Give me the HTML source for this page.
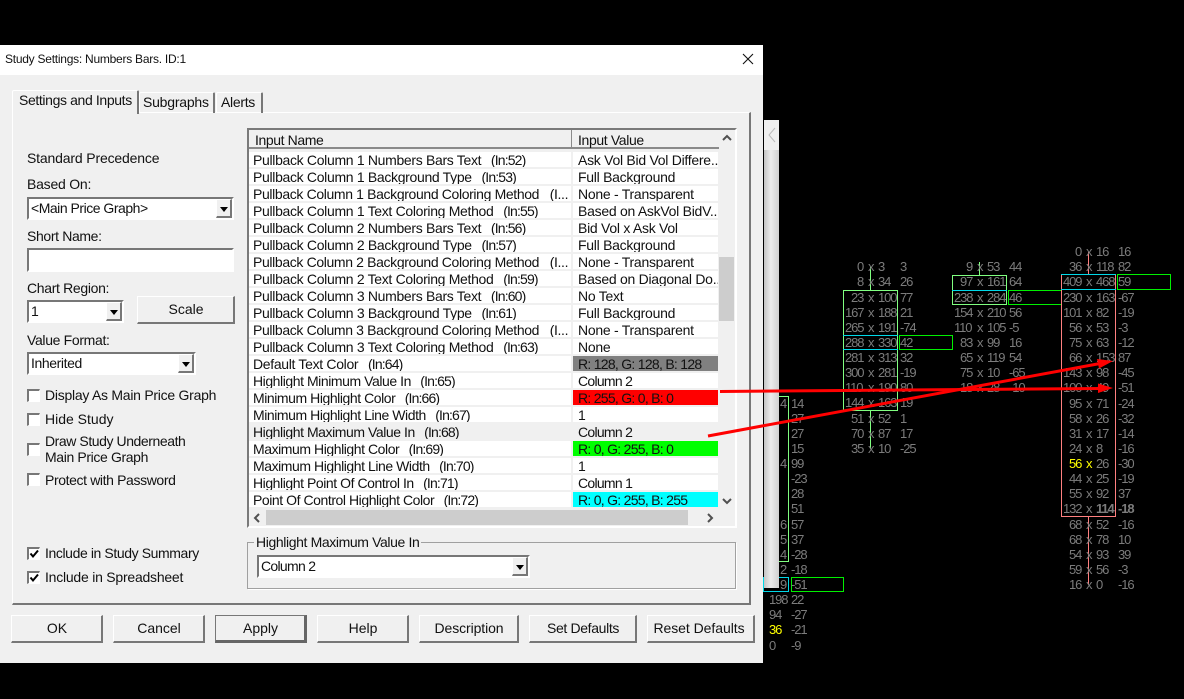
<!DOCTYPE html>
<html><head><meta charset="utf-8"><style>
html,body{margin:0;padding:0;background:#000;width:1184px;height:699px;overflow:hidden}
body{position:relative;font:14px/17px "Liberation Sans",sans-serif;color:#111;letter-spacing:-.3px}
div{position:absolute;white-space:pre;box-sizing:border-box}
i{font-style:normal;letter-spacing:-.85px;margin-left:-1px}
.bx{background:#fff;border-top:2px solid #777;border-left:2px solid #777;border-right:2px solid #fff;border-bottom:2px solid #fff;padding-left:2px}
.ar{background:#f0f0f0;border:1px solid #fff;border-right:2px solid #777;border-bottom:2px solid #777;width:16px;top:0;bottom:0;right:0}
.ar:after{content:"";position:absolute;left:3px;top:7px;border:4.5px solid transparent;border-top:5px solid #000;border-bottom:0}
.btn{background:#f0f0f0;border:1px solid #fff;border-right:2px solid #777;border-bottom:2px solid #777;text-align:center;line-height:24px;height:28px;top:615px;letter-spacing:0;padding-left:1px}
.cb{width:13px;height:13px;left:27px;background:#fff;border-top:2px solid #777;border-left:2px solid #777;border-right:1px solid #fff;border-bottom:1px solid #fff}
.l{left:45px}
.r{left:249px;width:322px;height:17px;padding-left:4px;border-bottom:2px solid #f0f0f0;background:#fff;line-height:16px;overflow:hidden;letter-spacing:-.32px}
.t{letter-spacing:-.36px}
.u{letter-spacing:-.44px}
.v{left:573px;width:145px;height:17px;padding-left:5px;border-bottom:2px solid #f0f0f0;background:#fff;line-height:16px;overflow:hidden;letter-spacing:-.27px}
.c{letter-spacing:-.72px}
.g{color:#7c7c7c;font-size:13px;line-height:16px;letter-spacing:-1.1px}
.p{background:linear-gradient(90deg,#c4c4c4,#ececec 45%,#d0d0d0)}
</style></head><body>

<!-- chart -->
<div style="left:0;top:0;width:1184px;height:699px" class="g">
<div style="left:843px;top:290px;width:55px;height:121px;border:1px solid #80ff80"></div>
<div style="left:843px;top:335px;width:55px;height:15px;border-top:1px solid #00d8e8;border-bottom:1px solid #00d8e8"></div>
<div style="left:870px;top:267px;width:1px;height:23px;background:#80ff80"></div>
<div style="left:870px;top:411px;width:1px;height:38px;background:#80ff80"></div>
<div style="left:899px;top:335px;width:54px;height:15px;border:1px solid #00f000"></div>
<div style="left:952px;top:275px;width:55px;height:30px;border:1px solid #80ff80"></div>
<div style="left:952px;top:290px;width:55px;height:1px;background:#00d8e8"></div>
<div style="left:1008px;top:290px;width:54px;height:15px;border:1px solid #00f000"></div>
<div style="left:979px;top:262px;width:1px;height:13px;background:#80ff80"></div>
<div style="left:1061px;top:274px;width:55px;height:243px;border:1px solid #ff8080"></div>
<div style="left:1061px;top:274px;width:55px;height:16px;border-top:1px solid #00d8e8;border-bottom:1px solid #00d8e8"></div>
<div style="left:1117px;top:274px;width:54px;height:16px;border:1px solid #00f000"></div>
<div style="left:1088px;top:252px;width:1px;height:22px;background:#ff8080"></div>
<div style="left:1088px;top:517px;width:1px;height:68px;background:#ff8080"></div>
<div style="left:779px;top:396px;width:10px;height:166px;border:1px solid #80ff80;border-left:0"></div>
<div style="left:763px;top:577px;width:26px;height:15px;border:1px solid #00d8e8"></div>
<div style="left:791px;top:577px;width:53px;height:15px;border:1px solid #00f000"></div>

<!-- column 1 -->
<div style="left:857px;top:259px">0</div><div style="left:868px;top:259px">x</div><div style="left:878px;top:259px">3</div><div style="left:900px;top:259px">3</div>
<div style="left:857px;top:274px">8</div><div style="left:868px;top:274px">x</div><div style="left:878px;top:274px">34</div><div style="left:900px;top:274px">26</div>
<div style="left:851px;top:290px">23</div><div style="left:868px;top:290px">x</div><div style="left:878px;top:290px">100</div><div style="left:900px;top:290px">77</div>
<div style="left:845px;top:305px">167</div><div style="left:868px;top:305px">x</div><div style="left:878px;top:305px">188</div><div style="left:900px;top:305px">21</div>
<div style="left:845px;top:320px">265</div><div style="left:868px;top:320px">x</div><div style="left:878px;top:320px">191</div><div style="left:900px;top:320px">-74</div>
<div style="left:845px;top:335px">288</div><div style="left:868px;top:335px">x</div><div style="left:878px;top:335px">330</div><div style="left:900px;top:335px">42</div>
<div style="left:845px;top:350px">281</div><div style="left:868px;top:350px">x</div><div style="left:878px;top:350px">313</div><div style="left:900px;top:350px">32</div>
<div style="left:845px;top:365px">300</div><div style="left:868px;top:365px">x</div><div style="left:878px;top:365px">281</div><div style="left:900px;top:365px">-19</div>
<div style="left:845px;top:380px">110</div><div style="left:868px;top:380px">x</div><div style="left:878px;top:380px">190</div><div style="left:900px;top:380px">80</div>
<div style="left:845px;top:395px">144</div><div style="left:868px;top:395px">x</div><div style="left:878px;top:395px">163</div><div style="left:900px;top:395px">19</div>
<div style="left:851px;top:411px">51</div><div style="left:868px;top:411px">x</div><div style="left:878px;top:411px">52</div><div style="left:900px;top:411px">1</div>
<div style="left:851px;top:426px">70</div><div style="left:868px;top:426px">x</div><div style="left:878px;top:426px">87</div><div style="left:900px;top:426px">17</div>
<div style="left:851px;top:441px">35</div><div style="left:868px;top:441px">x</div><div style="left:878px;top:441px">10</div><div style="left:900px;top:441px">-25</div>

<!-- column 2 -->
<div style="left:966px;top:259px">9</div><div style="left:977px;top:259px">x</div><div style="left:987px;top:259px">53</div><div style="left:1009px;top:259px">44</div>
<div style="left:960px;top:274px">97</div><div style="left:977px;top:274px">x</div><div style="left:987px;top:274px">161</div><div style="left:1009px;top:274px">64</div>
<div style="left:954px;top:290px">238</div><div style="left:977px;top:290px">x</div><div style="left:987px;top:290px">284</div><div style="left:1009px;top:290px">46</div>
<div style="left:954px;top:305px">154</div><div style="left:977px;top:305px">x</div><div style="left:987px;top:305px">210</div><div style="left:1009px;top:305px">56</div>
<div style="left:954px;top:320px">110</div><div style="left:977px;top:320px">x</div><div style="left:987px;top:320px">105</div><div style="left:1009px;top:320px">-5</div>
<div style="left:960px;top:335px">83</div><div style="left:977px;top:335px">x</div><div style="left:987px;top:335px">99</div><div style="left:1009px;top:335px">16</div>
<div style="left:960px;top:350px">65</div><div style="left:977px;top:350px">x</div><div style="left:987px;top:350px">119</div><div style="left:1009px;top:350px">54</div>
<div style="left:960px;top:365px">75</div><div style="left:977px;top:365px">x</div><div style="left:987px;top:365px">10</div><div style="left:1009px;top:365px">-65</div>
<div style="left:960px;top:380px">18</div><div style="left:977px;top:380px">x</div><div style="left:987px;top:380px">28</div><div style="left:1009px;top:380px">-10</div>

<!-- column 3 -->
<div style="left:1075px;top:244px">0</div><div style="left:1086px;top:244px">x</div><div style="left:1096px;top:244px">16</div><div style="left:1118px;top:244px">16</div>
<div style="left:1069px;top:259px">36</div><div style="left:1086px;top:259px">x</div><div style="left:1096px;top:259px">118</div><div style="left:1118px;top:259px">82</div>
<div style="left:1063px;top:274px">409</div><div style="left:1086px;top:274px">x</div><div style="left:1096px;top:274px">468</div><div style="left:1118px;top:274px">59</div>
<div style="left:1063px;top:290px">230</div><div style="left:1086px;top:290px">x</div><div style="left:1096px;top:290px">163</div><div style="left:1118px;top:290px">-67</div>
<div style="left:1063px;top:305px">101</div><div style="left:1086px;top:305px">x</div><div style="left:1096px;top:305px">82</div><div style="left:1118px;top:305px">-19</div>
<div style="left:1069px;top:320px">56</div><div style="left:1086px;top:320px">x</div><div style="left:1096px;top:320px">53</div><div style="left:1118px;top:320px">-3</div>
<div style="left:1069px;top:335px">75</div><div style="left:1086px;top:335px">x</div><div style="left:1096px;top:335px">63</div><div style="left:1118px;top:335px">-12</div>
<div style="left:1069px;top:350px">66</div><div style="left:1086px;top:350px">x</div><div style="left:1096px;top:350px">153</div><div style="left:1118px;top:350px">87</div>
<div style="left:1063px;top:365px">143</div><div style="left:1086px;top:365px">x</div><div style="left:1096px;top:365px">98</div><div style="left:1118px;top:365px">-45</div>
<div style="left:1063px;top:380px">100</div><div style="left:1086px;top:380px">x</div><div style="left:1096px;top:380px">49</div><div style="left:1118px;top:380px">-51</div>
<div style="left:1069px;top:396px">95</div><div style="left:1086px;top:396px">x</div><div style="left:1096px;top:396px">71</div><div style="left:1118px;top:396px">-24</div>
<div style="left:1069px;top:411px">58</div><div style="left:1086px;top:411px">x</div><div style="left:1096px;top:411px">26</div><div style="left:1118px;top:411px">-32</div>
<div style="left:1069px;top:426px">31</div><div style="left:1086px;top:426px">x</div><div style="left:1096px;top:426px">17</div><div style="left:1118px;top:426px">-14</div>
<div style="left:1069px;top:441px">24</div><div style="left:1086px;top:441px">x</div><div style="left:1096px;top:441px">8</div><div style="left:1118px;top:441px">-16</div>
<div style="left:1069px;top:456px;color:#ffff00">56</div><div style="left:1086px;top:456px;color:#ffff00">x</div><div style="left:1096px;top:456px">26</div><div style="left:1118px;top:456px">-30</div>
<div style="left:1069px;top:471px">44</div><div style="left:1086px;top:471px">x</div><div style="left:1096px;top:471px">25</div><div style="left:1118px;top:471px">-19</div>
<div style="left:1069px;top:486px">55</div><div style="left:1086px;top:486px">x</div><div style="left:1096px;top:486px">92</div><div style="left:1118px;top:486px">37</div>
<div style="left:1063px;top:501px">132</div><div style="left:1086px;top:501px">x</div><div style="left:1096px;top:501px;font-weight:bold">114</div><div style="left:1118px;top:501px;font-weight:bold">-18</div>
<div style="left:1069px;top:517px">68</div><div style="left:1086px;top:517px">x</div><div style="left:1096px;top:517px">52</div><div style="left:1118px;top:517px">-16</div>
<div style="left:1069px;top:532px">68</div><div style="left:1086px;top:532px">x</div><div style="left:1096px;top:532px">78</div><div style="left:1118px;top:532px">10</div>
<div style="left:1069px;top:547px">54</div><div style="left:1086px;top:547px">x</div><div style="left:1096px;top:547px">93</div><div style="left:1118px;top:547px">39</div>
<div style="left:1069px;top:562px">59</div><div style="left:1086px;top:562px">x</div><div style="left:1096px;top:562px">56</div><div style="left:1118px;top:562px">-3</div>
<div style="left:1069px;top:577px">16</div><div style="left:1086px;top:577px">x</div><div style="left:1096px;top:577px">0</div><div style="left:1118px;top:577px">-16</div>

<!-- left partial column -->
<div style="left:791px;top:396px">14</div><div style="left:791px;top:411px">27</div><div style="left:791px;top:426px">27</div><div style="left:791px;top:441px">15</div>
<div style="left:791px;top:456px">99</div><div style="left:791px;top:471px">-23</div><div style="left:791px;top:486px">28</div><div style="left:791px;top:501px">51</div>
<div style="left:791px;top:517px">57</div><div style="left:791px;top:532px">37</div><div style="left:791px;top:547px">-28</div><div style="left:791px;top:562px">-18</div>
<div style="left:791px;top:577px">-51</div><div style="left:791px;top:592px">22</div><div style="left:791px;top:607px">-27</div><div style="left:791px;top:622px">-21</div><div style="left:791px;top:638px">-9</div>
<div style="left:780px;top:396px">4</div><div style="left:780px;top:456px">4</div><div style="left:780px;top:517px">6</div><div style="left:780px;top:532px">5</div><div style="left:780px;top:547px">4</div><div style="left:780px;top:562px">2</div><div style="left:780px;top:577px">9</div>
<div style="left:769px;top:592px">198</div><div style="left:769px;top:607px">94</div><div style="left:769px;top:622px;color:#ffff00">36</div><div style="left:769px;top:638px">0</div>
</div>
<div class="p" style="left:764px;top:150px;width:15px;height:438px"></div>
<div style="left:764px;top:120px;width:15px;height:30px;background:#efefef"></div>
<svg style="position:absolute;left:764px;top:120px" width="15" height="30"><path d="M11 8 L5 15 L11 22" fill="none" stroke="#bbb"/></svg>

<!-- dialog -->
<div style="left:0;top:45px;width:763px;height:618px;background:#f0f0f0"></div>
<div style="left:0;top:45px;width:763px;height:30px;background:#fff"></div>
<div style="left:5px;top:51px;font-size:12px;letter-spacing:-.25px">Study Settings: Numbers Bars. ID:1</div>
<svg style="position:absolute;left:742px;top:53px" width="12" height="12"><path d="M1 1 L11 11 M11 1 L1 11" stroke="#111" stroke-width="1.1" fill="none"/></svg>

<!-- tab panel -->
<div style="left:12px;top:112px;width:739px;height:493px;border:1px solid #fff;border-right:2px solid #777;border-bottom:2px solid #777;background:#f0f0f0"></div>
<div style="left:139px;top:92px;width:76px;height:21px;border:1px solid #fff;border-right:2px solid #777;border-bottom:0;border-radius:2px 2px 0 0"></div>
<div style="left:216px;top:92px;width:47px;height:21px;border:1px solid #fff;border-right:2px solid #777;border-bottom:0;border-radius:2px 2px 0 0"></div>
<div style="left:12px;top:90px;width:127px;height:24px;border:1px solid #fff;border-right:2px solid #777;border-bottom:0;background:#f0f0f0;border-radius:2px 2px 0 0"></div>
<div style="left:19px;top:92px;letter-spacing:-.37px">Settings and Inputs</div>
<div style="left:143px;top:94px;letter-spacing:-.22px">Subgraphs</div>
<div style="left:221px;top:94px">Alerts</div>

<!-- left column -->
<div style="left:27px;top:150px;letter-spacing:-.16px">Standard Precedence</div>
<div style="left:27px;top:176px;letter-spacing:-.22px">Based On:</div>
<div class="bx" style="left:27px;top:197px;width:207px;height:23px;line-height:18px;letter-spacing:-.48px">&lt;Main Price Graph&gt;<div class="ar"></div></div>
<div style="left:27px;top:228px;letter-spacing:-.36px">Short Name:</div>
<div class="bx" style="left:27px;top:248px;width:207px;height:24px"></div>
<div style="left:27px;top:280px;letter-spacing:-.33px">Chart Region:</div>
<div class="bx" style="left:27px;top:300px;width:97px;height:23px;line-height:18px">1<div class="ar"></div></div>
<div class="btn" style="left:137px;top:296px;width:98px">Scale</div>
<div style="left:27px;top:332px;letter-spacing:-.33px">Value Format:</div>
<div class="bx" style="left:27px;top:352px;width:169px;height:23px;line-height:19px;letter-spacing:-.4px">Inherited<div class="ar"></div></div>

<div class="cb" style="top:389px"></div><div class="l" style="top:387px;letter-spacing:-.26px">Display As Main Price Graph</div>
<div class="cb" style="top:413px"></div><div class="l" style="top:411px;letter-spacing:0">Hide Study</div>
<div class="cb" style="top:443px"></div><div class="l" style="top:433px;letter-spacing:-.43px">Draw Study Underneath</div><div class="l" style="top:449px;letter-spacing:-.37px">Main Price Graph</div>
<div class="cb" style="top:473px"></div><div class="l" style="top:472px;letter-spacing:-.38px">Protect with Password</div>
<div class="cb" style="top:547px"><svg style="position:absolute;left:0;top:0" width="10" height="10"><path d="M1.5 4.5 L4 7.5 L9 1.5" fill="none" stroke="#000" stroke-width="2"/></svg></div><div class="l" style="top:545px;letter-spacing:-.4px">Include in Study Summary</div>
<div class="cb" style="top:571px"><svg style="position:absolute;left:0;top:0" width="10" height="10"><path d="M1.5 4.5 L4 7.5 L9 1.5" fill="none" stroke="#000" stroke-width="2"/></svg></div><div class="l" style="top:569px;letter-spacing:-.23px">Include in Spreadsheet</div>

<!-- table -->
<div style="left:247px;top:128px;width:490px;height:400px;border-top:2px solid #7a7a7a;border-left:2px solid #7a7a7a;border-right:2px solid #fff;border-bottom:2px solid #fff;background:#f0f0f0"></div>
<div style="left:249px;top:130px;width:470px;height:19px;background:#f0f0f0;border-bottom:2px solid #8a8a8a"></div>
<div style="left:571px;top:130px;width:1px;height:19px;background:#8a8a8a"></div>
<div style="left:255px;top:132px;letter-spacing:-.4px">Input Name</div>
<div style="left:578px;top:132px;letter-spacing:-.36px">Input Value</div>

<div class="r" style="top:152px">Pullback Column 1 Numbers Bars Text   <i>(In:52)</i></div><div class="v" style="top:152px">Ask Vol Bid Vol Differe...</div>
<div class="r" style="top:169px">Pullback Column 1 Background Type   <i>(In:53)</i></div><div class="v" style="top:169px">Full Background</div>
<div class="r t" style="top:186px">Pullback Column 1 Background Coloring Method   (I...</div><div class="v" style="top:186px">None - Transparent</div>
<div class="r" style="top:203px">Pullback Column 1 Text Coloring Method   <i>(In:55)</i></div><div class="v" style="top:203px">Based on AskVol BidV...</div>
<div class="r" style="top:220px">Pullback Column 2 Numbers Bars Text   <i>(In:56)</i></div><div class="v" style="top:220px">Bid Vol x Ask Vol</div>
<div class="r" style="top:237px">Pullback Column 2 Background Type   <i>(In:57)</i></div><div class="v" style="top:237px">Full Background</div>
<div class="r t" style="top:254px">Pullback Column 2 Background Coloring Method   (I...</div><div class="v" style="top:254px">None - Transparent</div>
<div class="r" style="top:271px">Pullback Column 2 Text Coloring Method   <i>(In:59)</i></div><div class="v" style="top:271px">Based on Diagonal Do...</div>
<div class="r" style="top:288px">Pullback Column 3 Numbers Bars Text   <i>(In:60)</i></div><div class="v" style="top:288px">No Text</div>
<div class="r" style="top:305px">Pullback Column 3 Background Type   <i>(In:61)</i></div><div class="v" style="top:305px">Full Background</div>
<div class="r t" style="top:322px">Pullback Column 3 Background Coloring Method   (I...</div><div class="v" style="top:322px">None - Transparent</div>
<div class="r" style="top:339px">Pullback Column 3 Text Coloring Method   <i>(In:63)</i></div><div class="v" style="top:339px">None</div>
<div class="r" style="top:356px">Default Text Color   <i>(In:64)</i></div><div class="v c" style="top:356px;background:#808080">R: 128, G: 128, B: 128</div>
<div class="r u" style="top:373px">Highlight Minimum Value In   <i>(In:65)</i></div><div class="v c" style="top:373px">Column 2</div>
<div class="r u" style="top:390px">Minimum Highlight Color   <i>(In:66)</i></div><div class="v c" style="top:390px;background:#ff0000">R: 255, G: 0, B: 0</div>
<div class="r u" style="top:407px">Minimum Highlight Line Width   <i>(In:67)</i></div><div class="v" style="top:407px">1</div>
<div class="r u" style="top:424px;background:#f0f0f0">Highlight Maximum Value In   <i>(In:68)</i></div><div class="v c" style="top:424px;background:#f0f0f0">Column 2</div>
<div class="r u" style="top:441px">Maximum Highlight Color   <i>(In:69)</i></div><div class="v c" style="top:441px;background:#00ff00">R: 0, G: 255, B: 0</div>
<div class="r u" style="top:458px">Maximum Highlight Line Width   <i>(In:70)</i></div><div class="v" style="top:458px">1</div>
<div class="r u" style="top:475px">Highlight Point Of Control In   <i>(In:71)</i></div><div class="v c" style="top:475px">Column 1</div>
<div class="r u" style="top:492px">Point Of Control Highlight Color   <i>(In:72)</i></div><div class="v c" style="top:492px;background:#00ffff">R: 0, G: 255, B: 255</div>

<!-- scrollbars -->
<div style="left:719px;top:257px;width:15px;height:64px;background:#cdcdcd"></div>
<svg style="position:absolute;left:721px;top:133px" width="12" height="10"><path d="M2 7 L6 3 L10 7" fill="none" stroke="#505050" stroke-width="2"/></svg>
<svg style="position:absolute;left:721px;top:496px" width="12" height="10"><path d="M2 3 L6 7 L10 3" fill="none" stroke="#505050" stroke-width="2"/></svg>
<div style="left:266px;top:510px;width:422px;height:15px;background:#cdcdcd"></div>
<svg style="position:absolute;left:252px;top:512px" width="10" height="12"><path d="M7 2 L3 6 L7 10" fill="none" stroke="#505050" stroke-width="2"/></svg>
<svg style="position:absolute;left:705px;top:512px" width="10" height="12"><path d="M3 2 L7 6 L3 10" fill="none" stroke="#505050" stroke-width="2"/></svg>

<!-- group -->
<div style="left:247px;top:542px;width:489px;height:47px;border:1px solid #a0a0a0;box-shadow:1px 1px 0 #fff"></div>
<div style="left:254px;top:534px;background:#f0f0f0;padding:0 2px;letter-spacing:-.38px">Highlight Maximum Value In</div>
<div class="bx" style="left:257px;top:555px;width:273px;height:23px;line-height:18px;letter-spacing:-.7px">Column 2<div class="ar"></div></div>

<!-- buttons -->
<div class="btn" style="left:11px;width:92px">OK</div>
<div class="btn" style="left:113px;width:92px">Cancel</div>
<div class="btn" style="left:215px;width:92px;border:1px solid #777;border-right:3px solid #666;border-bottom:3px solid #666">Apply</div>
<div class="btn" style="left:317px;width:92px">Help</div>
<div class="btn" style="left:419px;width:100px;letter-spacing:-.1px">Description</div>
<div class="btn" style="left:529px;width:108px;letter-spacing:-.35px">Set Defaults</div>
<div class="btn" style="left:647px;width:108px;letter-spacing:-.05px;padding:0 3px 0 0">Reset Defaults</div>

<!-- red arrows -->
<svg style="position:absolute;left:0;top:0" width="1184" height="699">
<path d="M720 391.5 L1100 388.5" stroke="#ff0000" stroke-width="3" fill="none"/>
<path d="M1113 388 L1098 383.5 L1098 393 Z" fill="#ff0000"/>
<path d="M708 436 L1100 363.5" stroke="#ff0000" stroke-width="3" fill="none"/>
<path d="M1113 361 L1097 359 L1099 368.5 Z" fill="#ff0000"/>
</svg>
</body></html>
